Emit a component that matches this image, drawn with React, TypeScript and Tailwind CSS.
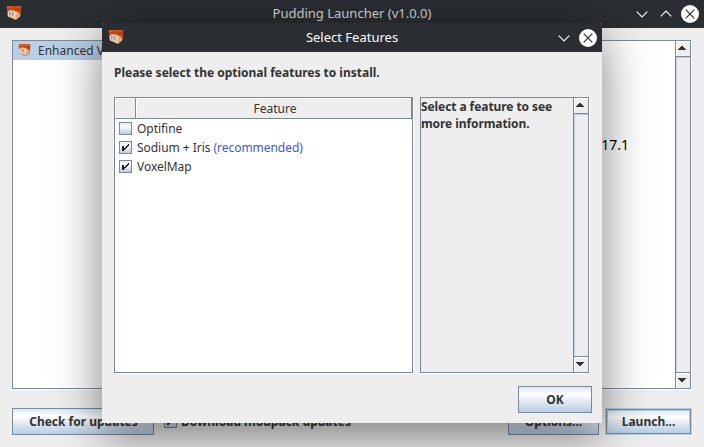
import React from "react";

const METAL =
  "bg-[linear-gradient(to_bottom,#dde8f3_0%,#ffffff_30%,#dde8f3_60%,#b8cfe5_100%)]";

function PuddingIcon({ size, className = "" }: { size: number; className?: string }) {
  return (
    <svg width={size} height={size} viewBox="0 0 16 16" className={`shrink-0 ${className}`}>
      <path d="M3 12 L9.5 15.2 L14.8 11.6 L15 9 Z" fill="#000" opacity=".3" />
      <path d="M0.8 0.6 L5 0 L15.2 0.2 L14.2 10.4 L9.8 14 L1.8 10.4 Z" fill="#f4bf98" />
      <path d="M0.8 0.6 L5 0 L15.2 0.2 L11 2.2 L0.8 1.6 Z" fill="#c94a10" />
      <path d="M11 2 L15.2 0.2 L14.6 8.6 L13.2 8.6 L12.6 6 L11 6.6 Z" fill="#b84208" />
      <path d="M0.8 1.4 L11 2 L11 5.8 L8 4.6 L3.4 4 L2.2 5.4 L1.2 6.4 Z" fill="#c4450e" />
      <path d="M10.6 8 L13 7.4 L14.3 8.8 L14.1 10.6 L9.8 14 Z" fill="#e0a379" />
      <path d="M3 6 H4.3 V9 H3 Z M6.2 6.6 H7.8 V9.8 H6.2 Z" fill="#3fa5dc" />
      <path d="M2.2 6 H3 V8.8 H2.2 Z M7.8 6.8 H8.8 V9.8 H7.8 Z" fill="#f7eee7" />
    </svg>
  );
}

function Chevron({ up = false }: { up?: boolean }) {
  return (
    <svg width="12" height="8" viewBox="0 0 12 8" fill="none" stroke="#fcfcfc" strokeWidth="1.1">
      <path d={up ? "M0.7 6.4 L6 1.1 L11.3 6.4" : "M0.7 1.6 L6 6.9 L11.3 1.6"} />
    </svg>
  );
}

function Close() {
  return (
    <svg width="18" height="18" viewBox="0 0 18 18" className="-ml-[3px]">
      <circle cx="9" cy="9" r="9" fill="#fcfcfc" />
      <path d="M4.7 4.7 L13.3 13.3 M13.3 4.7 L4.7 13.3" stroke="#2a2e32" strokeWidth="1.2" />
    </svg>
  );
}

function ScrollArrow({ down = false }: { down?: boolean }) {
  return (
    <div
      className={`flex h-4 shrink-0 items-center justify-center border-[#7a8a99] bg-[#eeeeee] pb-[2px] pr-[2px] shadow-[inset_1px_1px_0_#fff] ${
        down ? "border-t" : "border-b"
      }`}
    >
      <svg width="8" height="4" viewBox="0 0 8 4" shapeRendering="crispEdges" fill="#333">
        <path d={down ? "M0 0H8V1H7V2H6V3H5V4H3V3H2V2H1V1H0Z" : "M3 0H5V1H6V2H7V3H8V4H0V3H1V2H2V1H3Z"} />
      </svg>
    </div>
  );
}

function ScrollBar() {
  return (
    <div className="flex w-[15px] shrink-0 flex-col border-l border-[#7a8a99] bg-[#eeeeee]">
      <ScrollArrow />
      <div className="flex-1 border-l border-t border-[#b8cfe5]" />
      <ScrollArrow down />
    </div>
  );
}

function Check({ checked }: { checked: boolean }) {
  return (
    <span className={`flex h-[13px] w-[13px] shrink-0 items-center justify-center border border-[#7a8a99] ${METAL}`}>
      {checked && (
        <svg width="9" height="9" viewBox="0 0 9 9" shapeRendering="crispEdges" fill="#222">
          <path d="M1 3H3V5H4V4H5V3H6V2H7V1H8V3H7V4H6V5H5V6H4V7H3V8H1Z" />
        </svg>
      )}
    </span>
  );
}

const button = `flex shrink-0 items-center justify-center border border-[#7a8a99] text-[12px] font-bold ${METAL}`;

function Feature({ checked, children }: { checked: boolean; children: React.ReactNode }) {
  return (
    <div className="flex h-[19px] items-center gap-[5px] pl-1">
      <Check checked={checked} />
      <span className="whitespace-pre leading-[19px] tracking-[-0.04px]">{children}</span>
    </div>
  );
}

function SelectFeatures() {
  return (
    <div className="absolute left-[102px] top-[23px] flex h-[400px] w-[500px] flex-col rounded-t-[3px] bg-[#eeeeee] shadow-[0_12px_48px_rgba(0,0,0,0.5)]">
      <div className="grid h-[29px] shrink-0 grid-cols-[1fr_auto_1fr] items-center rounded-t-[3px] bg-[#2a2e32] pl-1.5 pr-[5px]">
        <PuddingIcon size={16} />
        <span className="-ml-px text-[13px] text-[#fcfcfc]">Select Features</span>
        <div className="flex items-center justify-end gap-3">
          <Chevron />
          <Close />
        </div>
      </div>
      <div className="flex flex-1 flex-col px-3">
        <p className="mt-3 h-[17px] font-bold leading-[17px] tracking-[-0.01px]">
          Please select the optional features to install.
        </p>
        <div className="mt-4 flex h-[276px]">
          <div className="w-[299px] border border-[#7a8a99] bg-white shadow-[1px_1px_0_#fff]">
            <div className="flex h-[21px] bg-[#eeeeee]">
              <div className="w-[21px] border-b border-r border-[#7a8a99] shadow-[inset_1px_1px_0_#fff]" />
              <div className="flex-1 border-b border-r border-[#7a8a99] pl-[3px] text-center leading-[21px] shadow-[inset_1px_1px_0_#fff]">
                Feature
              </div>
            </div>
            <Feature checked={false}>Optifine</Feature>
            <Feature checked>
              Sodium + Iris <span className="text-[#4159dc]">(recommended)</span>
            </Feature>
            <Feature checked>VoxelMap</Feature>
          </div>
          <div className="ml-[7px] flex w-[169px] border border-[#7a8a99] shadow-[1px_1px_0_#fff]">
            <p className="flex-1 font-bold leading-[17px] tracking-[-0.08px]">
              Select a feature to see
              <br />
              more information.
            </p>
            <ScrollBar />
          </div>
        </div>
        <div className="-mr-[2px] mt-[13px] flex justify-end">
          <button className={`${button} h-[27px] w-[74px]`}>OK</button>
        </div>
      </div>
    </div>
  );
}

export default function App() {
  return (
    <div className="relative flex h-[447px] w-[704px] flex-col overflow-hidden bg-[#eeeeee] font-['Noto_Sans',sans-serif] text-[12px] text-[#333333]">
      <div className="grid h-7 shrink-0 grid-cols-[1fr_auto_1fr] items-center bg-[#2a2e32] pl-1.5 pr-[5px]">
        <PuddingIcon size={16} />
        <span className="-ml-px text-[13px] text-[#d5d7d8]">Pudding Launcher (v1.0.0)</span>
        <div className="flex items-center justify-end gap-3">
          <Chevron />
          <Chevron up />
          <Close />
        </div>
      </div>
      <div className="mx-3 mt-3 flex h-[349px] w-[679px] gap-[5px]">
        <div className="w-[200px] border border-[#7a8a99] bg-white shadow-[1px_1px_0_#fff]">
          <div className="flex h-[19px] items-center gap-[7px] overflow-hidden bg-[#b8cfe5] pl-[5px]">
            <PuddingIcon size={13} />
            <span className="whitespace-nowrap">Enhanced Vanilla</span>
          </div>
        </div>
        <div className="flex flex-1 border border-[#7a8a99] bg-white shadow-[1px_1px_0_#fff]">
          <div className="flex-1 pr-[46px] pt-[94px] text-right text-[14px] leading-5 text-black">
            Minecraft 1.17.1
          </div>
          <ScrollBar />
        </div>
      </div>
      <div className="mx-3 mt-[19px] flex w-[679px] items-center">
        <button className={`${button} h-[27px] w-[142px] pl-px`}>Check for updates</button>
        <label className="ml-[10px] flex items-center gap-1 font-bold">
          <Check checked />
          Download modpack updates
        </label>
        <button className={`${button} ml-auto h-[27px] w-[91px]`}>Options...</button>
        <button
          className={`${button} ml-[7px] h-[25px] w-[85px] shadow-[inset_0_0_0_1px_#b8cfe5,0_0_0_1px_#b8cfe5]`}
        >
          Launch...
        </button>
      </div>
      <SelectFeatures />
    </div>
  );
}
